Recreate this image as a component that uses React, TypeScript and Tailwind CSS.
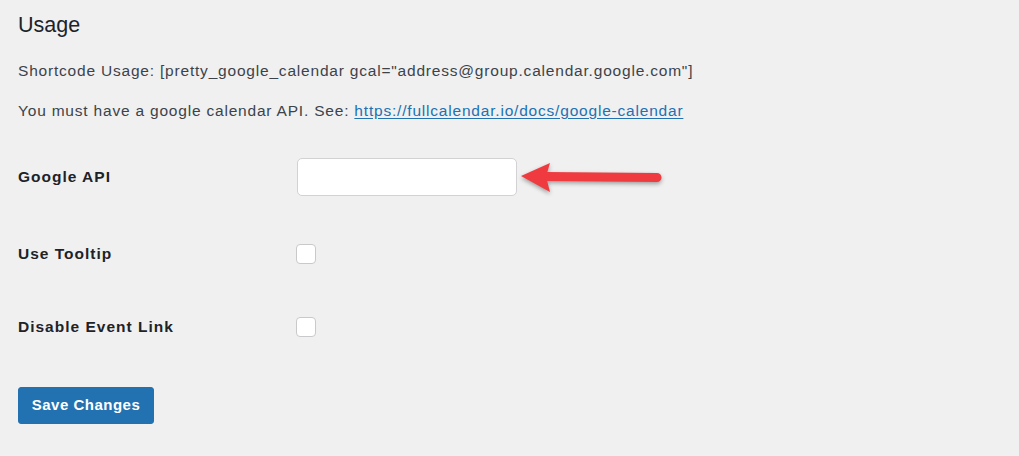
export default function App() {
  return (
    <div className="min-h-[456px] w-full bg-[#f0f0f1] px-[18px] pt-[10px] text-[#3c434a] [font-family:'Liberation_Sans',Arial,sans-serif]">
      <h2 className="text-[21.5px] leading-[30px] text-[#1d2327]">Usage</h2>
      <p className="mt-[21px] text-[15.5px] leading-[20px] tracking-[0.8px]">
        Shortcode Usage: [pretty_google_calendar gcal="address@group.calendar.google.com"]
      </p>
      <p className="mt-[20px] text-[15.5px] leading-[20px] tracking-[0.8px]">
        You must have a google calendar API. See:{" "}
        <a href="#" className="text-[#2271b1] underline underline-offset-2">
          https://fullcalendar.io/docs/google-calendar
        </a>
      </p>

      <div className="mt-[37px] flex flex-col">
        <div className="flex h-[38px] items-center">
          <label className="w-[279px] text-[15.5px] font-bold tracking-[1px] text-[#1d2327]">Google API</label>
          <input
            type="text"
            className="h-[38px] w-[220px] rounded-[5px] border border-[#d2d2d4] bg-white px-2 outline-none"
          />
          <svg width="145" height="36" viewBox="0 0 145 36" className="drop-shadow-[0_2px_2px_rgba(0,0,0,0.35)]">
            <path d="M29 17.5 L140 18.5" stroke="#ef3b40" strokeWidth="9" strokeLinecap="round" fill="none" />
            <path d="M4 17 L33 4 L29 17.5 L33 33 Z" fill="#ef3b40" />
          </svg>
        </div>

        <div className="mt-[48px] flex h-[20px] items-center">
          <label className="w-[278px] text-[15.5px] font-bold tracking-[1px] text-[#1d2327]">Use Tooltip</label>
          <input
            type="checkbox"
            className="h-[20px] w-[20px] appearance-none rounded-[4px] border border-[#c9c9cc] bg-white"
          />
        </div>

        <div className="mt-[53px] flex h-[20px] items-center">
          <label className="w-[278px] text-[15.5px] font-bold tracking-[1px] text-[#1d2327]">Disable Event Link</label>
          <input
            type="checkbox"
            className="h-[20px] w-[20px] appearance-none rounded-[4px] border border-[#c9c9cc] bg-white"
          />
        </div>

        <div className="mt-[50px]">
          <button className="h-[37px] w-[136px] rounded-[3px] border border-[#2271b1] bg-[#2271b1] text-[15px] font-bold tracking-[0.5px] text-white">
            Save Changes
          </button>
        </div>
      </div>
    </div>
  );
}
